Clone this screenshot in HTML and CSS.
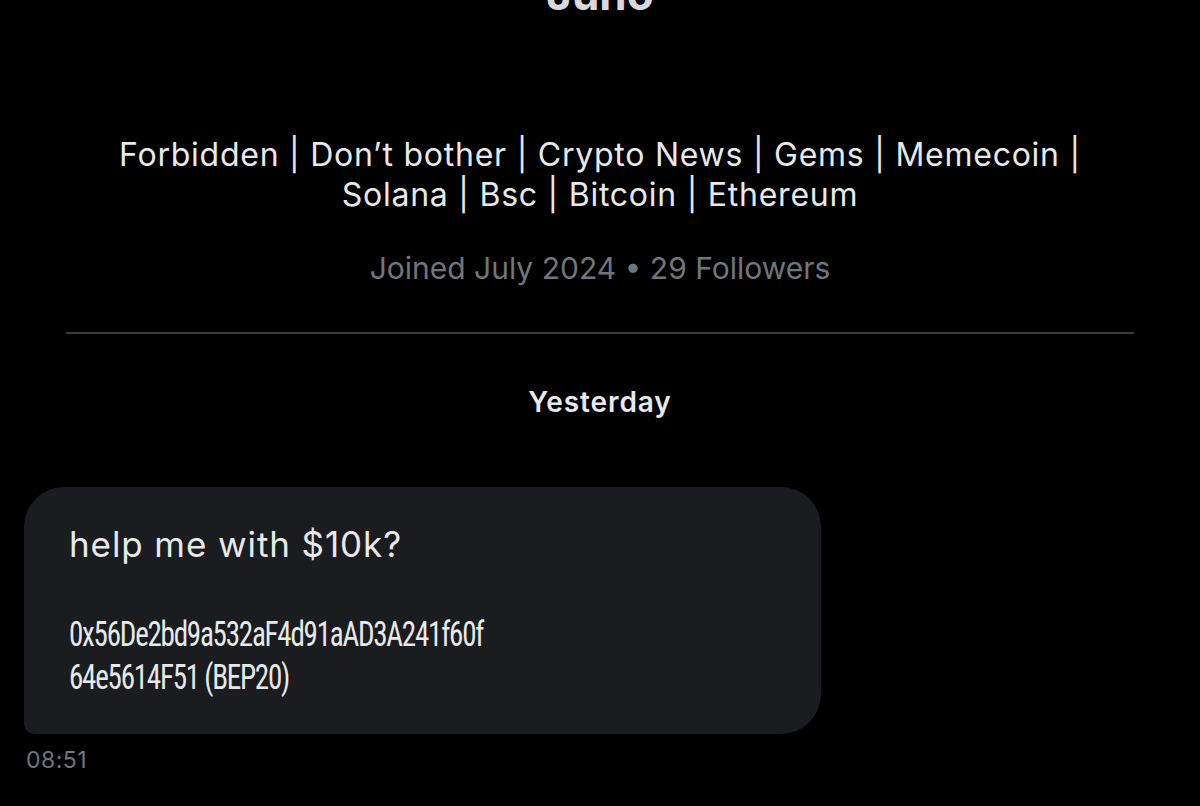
FILE: index.html
```html
<!DOCTYPE html>
<html lang="en">
  <head>
    <meta charset="UTF-8" />
    <meta name="viewport" content="width=device-width, initial-scale=1.0" />
    <title>Juno - Messages</title>
    <link rel="stylesheet" href="styles.css">
  </head>
  <body>
    <!-- Profile header -->
    <div class="profile">
      <h1 class="profile-name">Juno</h1>
      <p class="profile-bio">
        Forbidden | Don’t bother | Crypto News | Gems | Memecoin |<br />
        Solana | Bsc | Bitcoin | Ethereum
      </p>
      <p class="profile-meta">Joined July 2024 • 29 Followers</p>
    </div>

    <hr class="divider" />

    <!-- Conversation -->
    <div class="conversation">
      <div class="day-label">Yesterday</div>

      <div class="message">
        <div class="bubble">
          <p class="line">help me with $10k?</p>
          <p class="address"><span>0x56De2bd9a532aF4d91aAD3A241f60f</span><br /><span>64e5614F51 (BEP20)</span></p>
        </div>
        <div class="time">08:51</div>
      </div>
    </div>
  </body>
</html>
```

FILE: styles.css
```css
/* Page */
body {
  margin: 0;
  background: #000;
  color: #e7e9ea;
  font-family: Inter, "Noto Sans", sans-serif;
  overflow: hidden;
}

/* Profile header */
.profile {
  text-align: center;
}

.profile-name {
  margin: -34px 0 0;
  font-size: 44px;
  font-weight: 700;
  line-height: 56px;
  color: #d9d9d9;
}

.profile-bio {
  margin: 113px 0 0;
  font-size: 32px;
  line-height: 40px;
  letter-spacing: 0.75px;
  color: #e7e9ea;
}

.profile-meta {
  margin: 35px 0 0;
  font-size: 30px;
  line-height: 36px;
  color: #71767b;
}

.divider {
  margin: 46px 66px 0;
  border: none;
  height: 2px;
  background: #3a3b3d;
}

/* Conversation */
.conversation {
  padding: 0 24px;
}

.day-label {
  margin-top: 52px;
  text-align: center;
  font-size: 28px;
  font-weight: 600;
  line-height: 32px;
  letter-spacing: 0.9px;
  color: #e7e9ea;
}

.message {
  margin-top: 69px;
}

.bubble {
  width: 797px;
  box-sizing: border-box;
  padding: 36px 45px 35px;
  background: #1b1c1f;
  border-radius: 40px 40px 40px 10px;
  font-size: 35px;
  line-height: 43px;
}

.bubble p {
  margin: 0;
}

.bubble .line {
  letter-spacing: 0.9px;
}

/* Wallet address is shown narrower, as in the app */
.bubble .address {
  margin-top: 47px;
  font-family: "Roboto Condensed", "DejaVu Sans Condensed", Inter, sans-serif;
  font-stretch: condensed;
  letter-spacing: -1.5px;
}

.bubble .address span {
  display: inline-block;
  transform: scaleX(0.83);
  transform-origin: left center;
  white-space: nowrap;
}

.time {
  margin-top: 12px;
  padding-left: 2px;
  font-size: 23px;
  line-height: 28px;
  letter-spacing: 0.5px;
  color: #71767b;
}
```
